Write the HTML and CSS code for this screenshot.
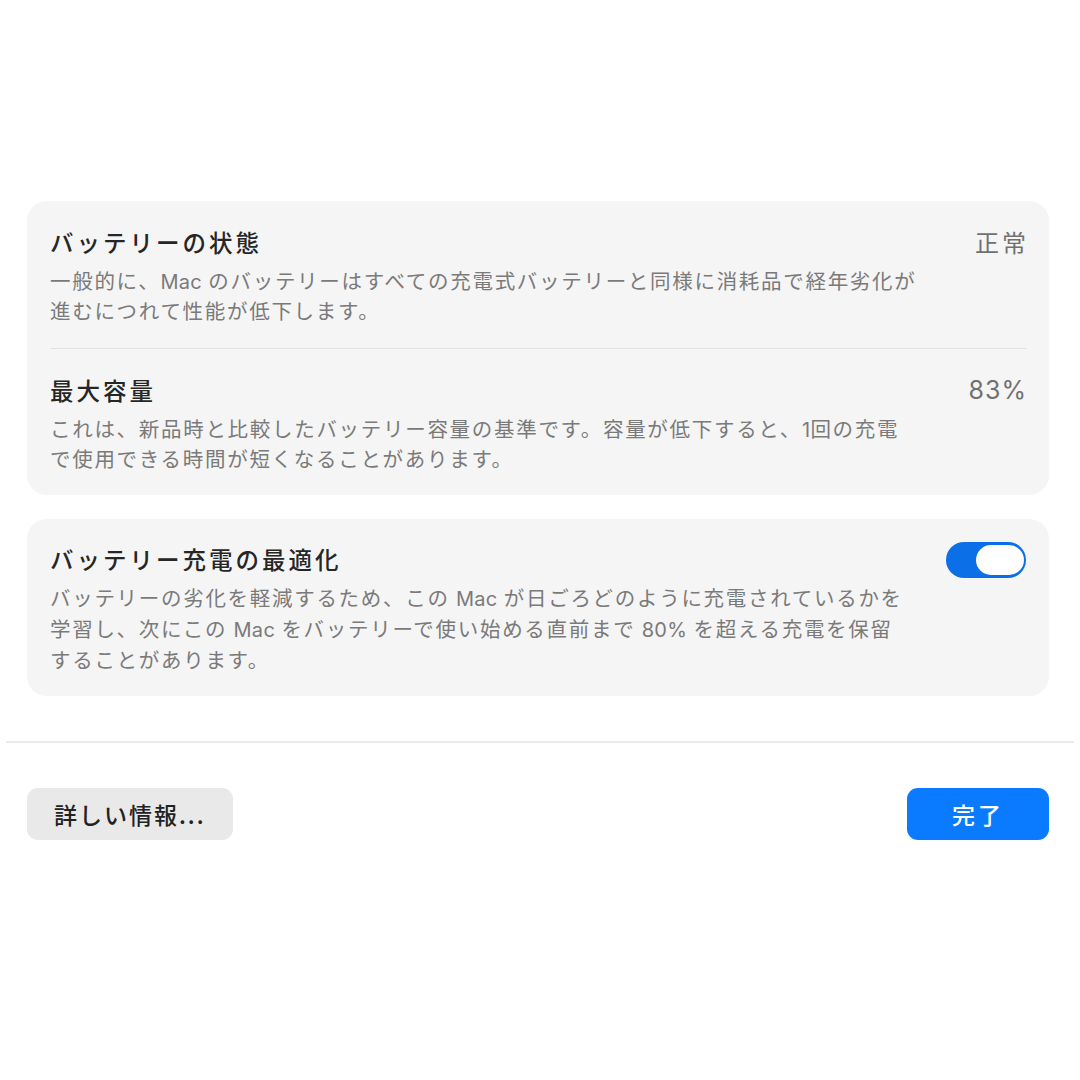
FILE: index.html
```html
<!DOCTYPE html>
<html lang="ja">
  <head>
    <meta charset="utf-8">
    <link rel="stylesheet" href="styles.css">
    <title>バッテリーの状態</title>
  </head>
  <body>
    <main class="sheet">
      <section class="card">
        <div class="row">
          <div class="text">
            <h2 class="title">バッテリーの状態</h2>
            <p class="desc">一般的に、<span class="lat">Mac</span> のバッテリーはすべての充電式バッテリーと同様に消耗品で経年劣化が<br>進むにつれて性能が低下します。</p>
          </div>
          <span class="value">正常</span>
        </div>
        <div class="row">
          <div class="text">
            <h2 class="title">最大容量</h2>
            <p class="desc">これは、新品時と比較したバッテリー容量の基準です。容量が低下すると、<span class="lat">1</span>回の充電<br>で使用できる時間が短くなることがあります。</p>
          </div>
          <span class="value num">83%</span>
        </div>
      </section>

      <section class="card">
        <div class="row">
          <div class="text">
            <h2 class="title">バッテリー充電の最適化</h2>
            <p class="desc tall">バッテリーの劣化を軽減するため、この <span class="lat">Mac</span> が日ごろどのように充電されているかを<br>学習し、次にこの <span class="lat">Mac</span> をバッテリーで使い始める直前まで <span class="lat">80%</span> を超える充電を保留<br>することがあります。</p>
          </div>
          <button class="toggle" aria-pressed="true"><span class="knob"></span></button>
        </div>
      </section>
    </main>

    <hr class="rule">

    <footer class="actions">
      <button class="btn">詳しい情報...</button>
      <button class="btn primary">完了</button>
    </footer>
  </body>
</html>
```

FILE: styles.css
```css
body {
  margin: 0;
  background: #fff;
  font-family: "Noto Sans CJK JP", "Noto Sans", sans-serif;
  color: #222;
}

.sheet {
  padding: 201px 31px 0 27px;
}

.card {
  background-color: #f5f5f5;
  border-radius: 20px;
  padding: 0 23px;
  margin-bottom: 24px;
}
.card:last-child {
  margin-bottom: 0;
}

.row {
  display: flex;
  justify-content: space-between;
  align-items: flex-start;
  padding: 26px 0 23px;
}
.row + .row {
  border-top: 1px solid #e2e2e2;
  padding-bottom: 22px;
}
.card:last-child .row {
  padding: 25px 0 21px;
}

.title {
  margin: 0;
  font-size: 23.5px;
  line-height: 30px;
  font-weight: 500;
  letter-spacing: 3px;
  color: #262626;
}

.desc {
  margin: 8px 0 0;
  font-size: 20.5px;
  line-height: 30px;
  letter-spacing: 1.7px;
  color: #7a7a7a;
  white-space: nowrap;
}
.desc.tall {
  line-height: 31px;
}
.lat {
  font-family: Inter, "Noto Sans", sans-serif;
  font-size: 20px;
  line-height: 0;
  letter-spacing: 0.3px;
}

.value {
  font-size: 24px;
  line-height: 30px;
  letter-spacing: 3px;
  color: #707070;
  margin-right: -3px;
}
.value.num {
  font-family: Inter, "Noto Sans", sans-serif;
  font-size: 25px;
  letter-spacing: 1px;
  margin-right: -1px;
}

.toggle {
  display: flex;
  justify-content: flex-end;
  align-items: center;
  width: 80px;
  height: 36px;
  margin-top: -2px;
  padding: 0 2px;
  border: none;
  border-radius: 18px;
  background-color: #0b6fe8;
  cursor: pointer;
}
.knob {
  width: 48px;
  height: 30px;
  border-radius: 15px;
  background: #fff;
}

.rule {
  margin: 45px 6px 0;
  border: none;
  height: 2px;
  background: #ebebeb;
}

.actions {
  display: flex;
  justify-content: space-between;
  padding: 45px 31px 0 27px;
}

.btn {
  height: 52px;
  padding: 0 27px;
  border: none;
  border-radius: 11px;
  background-color: #e9e9e9;
  font-family: inherit;
  font-size: 23px;
  font-weight: 500;
  letter-spacing: 2px;
  color: #222;
  cursor: pointer;
}
.btn.primary {
  width: 142px;
  padding: 0;
  background-color: #0a7bff;
  color: #fff;
  letter-spacing: 3px;
}
```
